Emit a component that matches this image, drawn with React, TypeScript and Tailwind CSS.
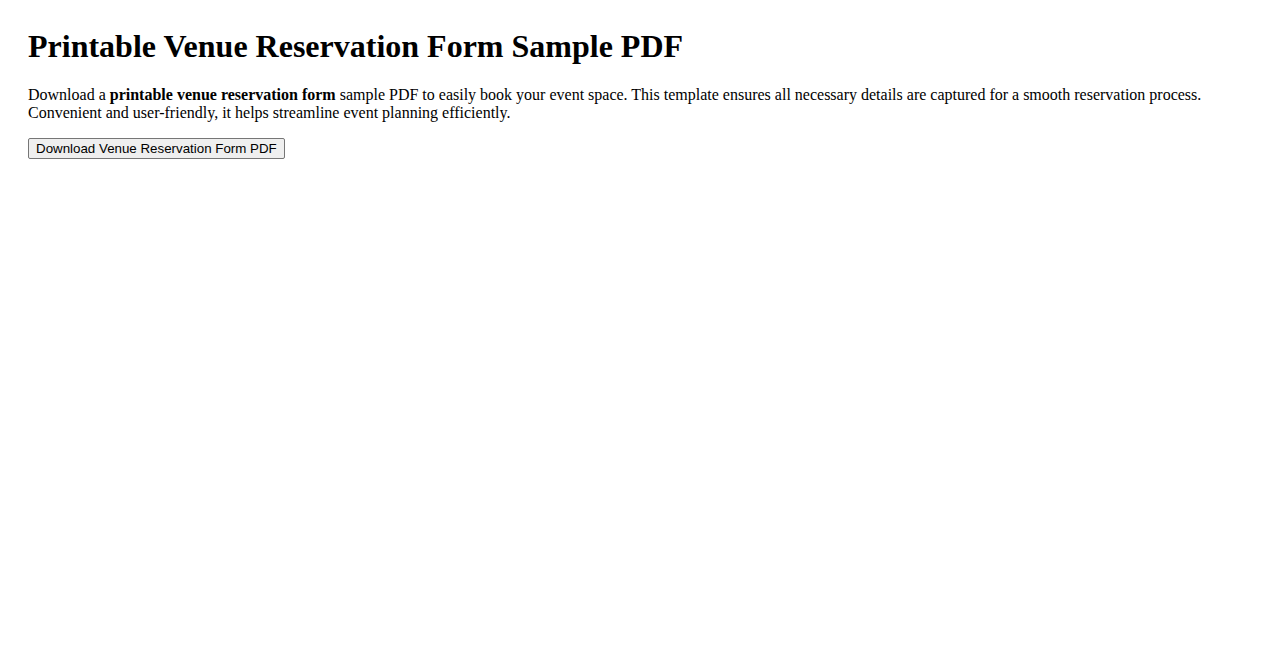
export default function App() {
  return (
    <div className="p-7 font-['Liberation_Serif',serif] leading-[normal] text-black bg-white min-h-screen">
      <h1 className="text-[32px] font-bold leading-[normal] mb-[21px]">Printable Venue Reservation Form Sample PDF</h1>
      <p className="text-base leading-[normal] mb-4">
        Download a <strong>printable venue reservation form</strong> sample PDF to easily book your event space. This template ensures all necessary details are captured for a smooth reservation process. Convenient and user-friendly, it helps streamline event planning efficiently.
      </p>
      <button className="block font-['Liberation_Sans',Arial,sans-serif] text-[13.333px] leading-[normal] px-[7px] py-[2px] bg-[#efefef] border border-[#767676] rounded-[2px] text-black">
        Download Venue Reservation Form PDF
      </button>
    </div>
  );
}
